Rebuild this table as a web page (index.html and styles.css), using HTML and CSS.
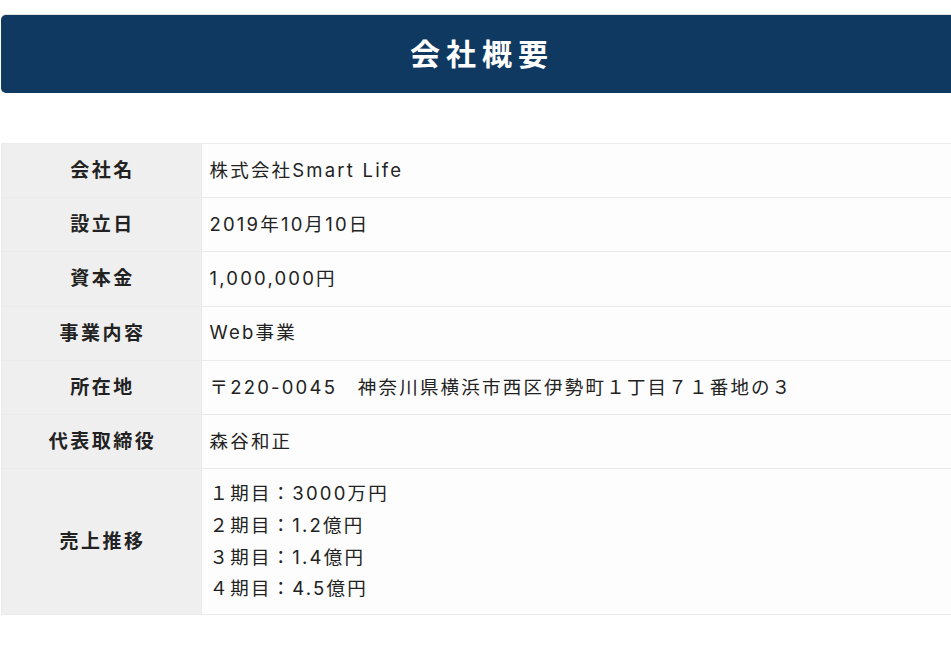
FILE: index.html
```
<!DOCTYPE html>
<html lang="ja">
<head>
<meta charset="utf-8">
<title>会社概要</title>
<link rel="stylesheet" href="styles.css">
</head>
<body>
<div class="page">
  <h1 class="title">会社概要</h1>
  <table class="outline">
    <tr><th>会社名</th><td>株式会社Smart Life</td></tr>
    <tr><th>設立日</th><td>2019年10月10日</td></tr>
    <tr><th>資本金</th><td>1,000,000円</td></tr>
    <tr><th>事業内容</th><td>Web事業</td></tr>
    <tr><th>所在地</th><td>〒220-0045　神奈川県横浜市西区伊勢町１丁目７１番地の３</td></tr>
    <tr><th>代表取締役</th><td>森谷和正</td></tr>
    <tr><th>売上推移</th><td>１期目：3000万円<br>２期目：1.2億円<br>３期目：1.4億円<br>４期目：4.5億円</td></tr>
  </table>
</div>
</body>
</html>
```
FILE: styles.css
```
html, body {
  margin: 0;
  padding: 0;
  overflow: hidden;
  background: #fff;
}
body {
  font-family: Inter, "Noto Sans CJK JP", sans-serif;
  color: #222;
}
.page {
  width: 962px;
  margin: 15px 0 0 1px;
}
.title {
  margin: 0;
  height: 78px;
  background: #0f3961;
  border-radius: 5px 0 0 5px;
  box-shadow: 0 -1px 0 rgba(0,0,0,0.12);
  color: #fff;
  font-size: 30px;
  font-weight: 700;
  letter-spacing: 0.2em;
  line-height: 78px;
  text-align: center;
}
.outline {
  margin-top: 50px;
  width: 100%;
  border-collapse: collapse;
  font-size: 18.5px;
}
.outline th,
.outline td {
  border: 1px solid #ebebeb;
  vertical-align: middle;
}
.outline th {
  width: 196px;
  background: #efefef;
  font-size: 19px;
  font-weight: 700;
  letter-spacing: 2.5px;
  line-height: 23.2px;
  padding: 15px 0 15px 2.5px;
  text-align: center;
}
.outline td {
  background: #fdfdfd;
  letter-spacing: 2.2px;
  line-height: 31.7px;
  padding: 9px 8px;
  text-align: left;
}
```
